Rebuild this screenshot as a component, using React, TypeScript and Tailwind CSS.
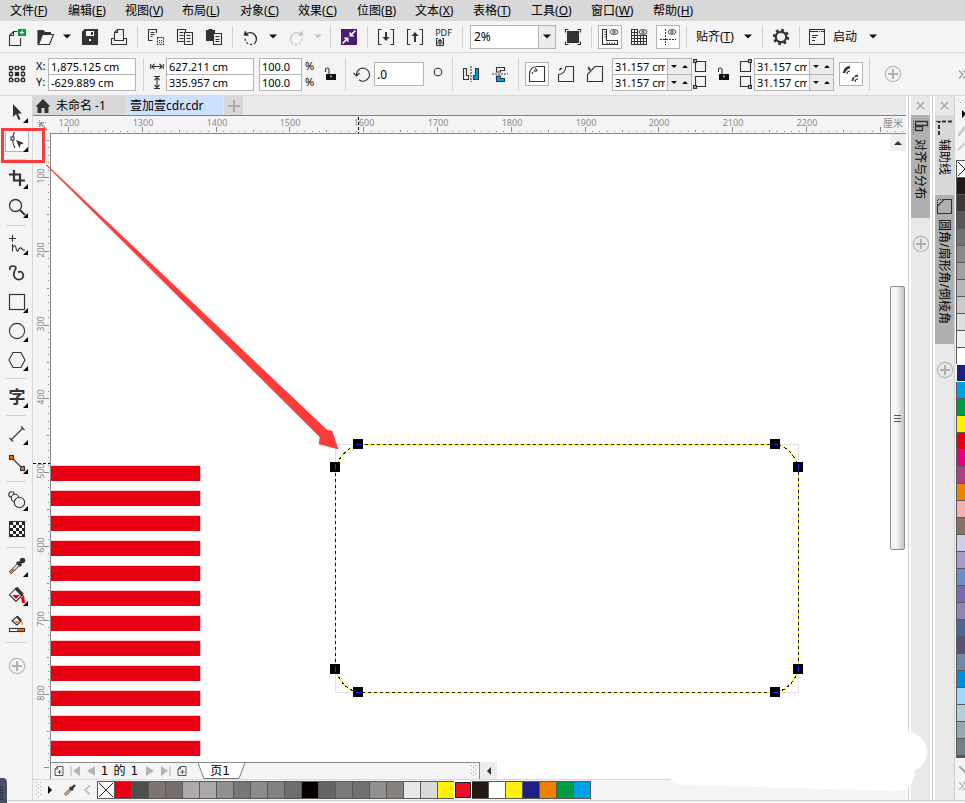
import React, { useState } from 'react'

const menus = [
  ['文件', 'F', 'w-[58px]'], ['编辑', 'E', 'w-[57px]'], ['视图', 'V', 'w-[57px]'], ['布局', 'L', 'w-[58px]'],
  ['对象', 'C', 'w-[58px]'], ['效果', 'C', 'w-[59px]'], ['位图', 'B', 'w-[58px]'], ['文本', 'X', 'w-[58px]'],
  ['表格', 'T', 'w-[58px]'], ['工具', 'O', 'w-[60px]'], ['窗口', 'W', 'w-[62px]'], ['帮助', 'H', 'w-[60px]'],
]

const sideColors = [
  '#231815', '#3e3535', '#595757', '#727171', '#898989', '#9fa0a0', '#b5b5b6', '#c9caca', '#dcdddd', '#efefef', '#ffffff',
  '#1d2088', '#00a0e9', '#009944', '#fff100', '#e60012', '#e4007f', '#ae4085', '#ef8200', '#f4b0b0', '#877067',
  '#cfcce6', '#a79bcb', '#6f8bc8', '#7a6bb0', '#9084b0', '#4e6594', '#5a506f', '#7287a6', '#008ddb', '#9fd8f6',
  '#b5cdd9', '#95a8b1', '#717f86',
]

const docColors = [
  '#e60012', '#4c4f4c', '#7d7570', '#766d6c', '#b0a9a9', '#aaaaaa', '#909090', '#787878', '#8c8c8c', '#828282',
  '#6e6e6e', '#050000', '#636664', '#7a7a7a', '#707070', '#909090', '#878180', '#e8e8e8', '#d6dad8', '#fff100',
  '#e81123', '#231815', '#ffffff', '#fff100', '#1d2088', '#ef8200', '#009944', '#00a0e9',
]

type IconProps = { children: React.ReactNode; w?: number; h?: number }

function Icon({ children, w = 18, h = 18 }: IconProps) {
  return (
    <svg width={w} height={h} viewBox={`0 0 ${w} ${h}`} fill="none" stroke="#333" strokeWidth="1.1" className="shrink-0" aria-hidden="true">
      {children}
    </svg>
  )
}

function IconButton({ label, children, boxed }: { label: string; children: React.ReactNode; boxed?: boolean }) {
  return (
    <button aria-label={label} className="flex h-6 w-[29px] shrink-0 items-center justify-center">
      <span className={boxed ? 'flex size-6 items-center justify-center border border-[#b4b4b4] bg-white' : 'flex size-6 items-center justify-center'}>
        {children}
      </span>
    </button>
  )
}

function Caret({ light }: { light?: boolean }) {
  return (
    <span className="flex w-4 shrink-0 justify-center">
      <svg width="8" height="5" aria-hidden="true"><path d="M0 0.5H8L4 4.5Z" fill={light ? '#c6c6c6' : '#111'} /></svg>
    </span>
  )
}

function Sep({ tall }: { tall?: boolean }) {
  return (
    <span className="flex w-2 shrink-0 justify-center">
      <span className={tall ? 'h-[33px] w-px bg-[#d2d2d2]' : 'h-[22px] w-px bg-[#d2d2d2]'} />
    </span>
  )
}

function Plus() {
  return (
    <Icon>
      <circle cx="9" cy="9" r="7.7" stroke="#b8b8b8" strokeWidth="1.2" />
      <path d="M9 4V14M4 9H14" stroke="#b0b0b0" strokeWidth="2" />
    </Icon>
  )
}

function Lock() {
  return (
    <Icon w={12} h={14}>
      <path d="M1.5 5V2.5Q1.5 1 3 1H3.5Q5 1 5 2.5V7" />
      <rect x="2" y="7" width="10" height="6" fill="#111" stroke="none" />
      <path d="M7 8.5V10.5" stroke="#fff" />
    </Icon>
  )
}

function Menu() {
  return (
    <nav className="flex h-[21px] shrink-0 bg-[#d8d8d8] pl-2">
      {menus.map(([name, key, w]) => (
        <button key={name} className={`${w} shrink-0 whitespace-nowrap pl-[2px] text-left`}>
          {name}(<u>{key}</u>)
        </button>
      ))}
    </nav>
  )
}

function Eye() {
  return <><ellipse cx="13" cy="4" rx="4" ry="2.4" strokeWidth="0.9" /><circle cx="13" cy="4" r="1.2" strokeWidth="0.9" /></>
}

function StandardBar() {
  const [zoom, setZoom] = useState('2%')
  return (
    <div className="flex h-8 shrink-0 items-center border-b border-[#d8d8d8] pl-[2px]">
      <IconButton label="新建">
        <Icon>
          <path d="M9.5 3.5H5.5L1.5 7.5V17.5H12.5V10M5.5 3.5V7.5H1.5" />
          <rect x="10" y="1" width="8" height="7" fill="#00a03c" stroke="none" />
          <path d="M14 2.5V6.5M12 4.5H16" stroke="#fff" />
        </Icon>
      </IconButton>
      <IconButton label="打开">
        <Icon>
          <path d="M1 16.5V2.5H6L8 4.5H13.5V6.5H5.5L1 16.5Z" fill="#333" />
          <path d="M5.5 6.5H16.5L12.5 16.5H1.5Z" fill="#f4f4f4" />
        </Icon>
      </IconButton>
      <span className="-ml-px flex"><Caret /></span>
      <IconButton label="保存">
        <Icon>
          <path d="M1.5 4L4 1.5H16.5V16.5H1.5Z" fill="#333" />
          <rect x="5" y="3" width="8" height="5" fill="#fff" stroke="none" />
          <rect x="10" y="4" width="2" height="3" fill="#333" stroke="none" />
          <rect x="8" y="11" width="2" height="2" fill="#fff" stroke="none" />
        </Icon>
      </IconButton>
      <IconButton label="打印">
        <Icon><path d="M4.5 12.5V4.5L7.5 1.5H13.5V12.5ZM7.5 1.5V4.5H4.5M4.5 10.5H1.5V16.5H16.5V10.5H13.5" /></Icon>
      </IconButton>
      <Sep />
      <IconButton label="剪切">
        <Icon>
          <path d="M9.5 5V1.5H1.5V12.5H5.5M3.5 4.5H7.5M3.5 6.5H7.5M3.5 8.5H5.5" />
          <rect x="10.5" y="9.5" width="6" height="7" strokeDasharray="2 1" />
          <path d="M12 12.5H15M12 14.5H15" strokeDasharray="1 1" />
        </Icon>
      </IconButton>
      <IconButton label="复制">
        <Icon>
          <path d="M1.5 1.5H9.5V13.5H1.5ZM3.5 4.5H7.5M3.5 7.5H7.5M3.5 10.5H7.5" />
          <path d="M8.5 4.5H16.5V16.5H8.5Z" fill="#f4f4f4" />
          <path d="M10.5 7.5H14.5M10.5 10.5H14.5M10.5 13.5H14.5" />
        </Icon>
      </IconButton>
      <IconButton label="粘贴">
        <Icon>
          <path d="M1.5 2.5H4V1.5H7V2.5H9.5V12.5H1.5Z" fill="#333" />
          <path d="M8.5 5.5H16.5V16.5H8.5Z" fill="#f4f4f4" />
          <path d="M10.5 8.5H14.5M10.5 11.5H14.5M10.5 13.5H14.5" />
        </Icon>
      </IconButton>
      <Sep />
      <IconButton label="撤消">
        <Icon>
          <path d="M4 6A6.2 6.2 0 1 1 12 16" strokeWidth="1.4" />
          <path d="M1.5 7.5L7 8L3 2.5Z" fill="#333" stroke="none" />
          <path d="M10 16.4A6.2 6.2 0 0 1 3 10.5" strokeDasharray="2 2" strokeWidth="1.4" />
        </Icon>
      </IconButton>
      <Caret />
      <IconButton label="重做">
        <Icon>
          <path d="M14 6A6.2 6.2 0 1 0 6 16" stroke="#c6c6c6" strokeWidth="1.4" />
          <path d="M16.5 7.5L11 8L15 2.5Z" fill="#c6c6c6" stroke="none" />
          <path d="M8 16.4A6.2 6.2 0 0 0 15 10.5" strokeDasharray="2 2" stroke="#c6c6c6" strokeWidth="1.4" />
        </Icon>
      </IconButton>
      <Caret light />
      <Sep />
      <IconButton label="搜索内容">
        <Icon>
          <rect x="1" y="1" width="16" height="16" fill="#4b1a78" stroke="none" />
          <path d="M15.5 2.5L11 7M2.5 15.5L7 11" stroke="#fff" strokeWidth="1.6" />
          <path d="M9.5 3.5V8.5H14.5ZM3.5 9.5H8.5V14.5Z" fill="#fff" stroke="none" />
        </Icon>
      </IconButton>
      <Sep />
      <IconButton label="导入">
        <Icon>
          <path d="M4.5 1.5H1.5V16.5H4.5M13.5 1.5H16.5V16.5H13.5" />
          <path d="M9 4V11" strokeWidth="2" /><path d="M5.5 9H12.5L9 13Z" fill="#333" stroke="none" />
        </Icon>
      </IconButton>
      <IconButton label="导出">
        <Icon>
          <path d="M4.5 1.5H1.5V16.5H4.5M13.5 1.5H16.5V16.5H13.5" />
          <path d="M9 7V14" strokeWidth="2" /><path d="M5.5 8H12.5L9 4Z" fill="#333" stroke="none" />
        </Icon>
      </IconButton>
      <button aria-label="发布为PDF" className="flex h-6 w-[29px] shrink-0 flex-col items-center justify-center text-[9px] leading-[9px] text-[#222]">
        <span>PDF</span>
        <span className="flex w-4 justify-start">
          <Icon w={8} h={9}><path d="M2 1.5H0.5V8.5H7.5V1.5H6M4 8V2M2 4.5L4 2.5L6 4.5M1 6H7" /></Icon>
        </span>
      </button>
      <Sep />
      <div className="relative ml-1 mr-[2px] h-6 w-[86px] shrink-0">
        <select aria-label="缩放级别" value={zoom} onChange={e => setZoom(e.target.value)} className="h-6 w-full appearance-none border border-[#b4b4b4] bg-white pl-[3px] outline-none">
          <option>2%</option>
          <option>50%</option>
          <option>100%</option>
        </select>
        <span className="pointer-events-none absolute inset-y-px right-px flex w-[17px] items-center border-l border-[#b4b4b4] bg-[#ececec]"><Caret /></span>
      </div>
      <IconButton label="全屏预览">
        <Icon>
          <rect x="3.5" y="3.5" width="11" height="11" fill="#333" />
          <path d="M1.5 4.5V1.5H4.5M13.5 1.5H16.5V4.5M16.5 13.5V16.5H13.5M4.5 16.5H1.5V13.5" />
        </Icon>
      </IconButton>
      <Sep />
      <IconButton label="显示标尺" boxed>
        <Icon>
          <path d="M1.5 1.5H5.5V12.5H16.5V16.5H1.5ZM3.5 4H5M3.5 6.5H5M3.5 9H5M6 14.5V16M8.5 14.5V16M11 14.5V16M13.5 14.5V16" />
          <Eye />
        </Icon>
      </IconButton>
      <IconButton label="显示网格">
        <Icon>
          <path d="M1.5 1V17M4.5 1V17M7.5 1V17M10.5 8V17M13.5 8V17M16.5 8V17M1 1.5H8M1 4.5H8M1 7.5H17M1 10.5H17M1 13.5H17M1 16.5H17" strokeWidth="1" />
          <Eye />
        </Icon>
      </IconButton>
      <IconButton label="显示辅助线" boxed>
        <Icon>
          <path d="M6.5 1V17M1 11.5H17" strokeDasharray="2 1" strokeWidth="1" />
          <Eye />
        </Icon>
      </IconButton>
      <Sep />
      <button className="flex h-6 w-[68px] shrink-0 items-center justify-between whitespace-nowrap pl-[6px] pr-[2px]">
        <span>贴齐(<u>T</u>)</span><Caret />
      </button>
      <Sep />
      <IconButton label="选项">
        <Icon>
          <circle cx="9" cy="9" r="5.2" strokeWidth="2.2" />
          <circle cx="9" cy="9" r="7" strokeWidth="2.4" strokeDasharray="2.75 2.75" />
        </Icon>
      </IconButton>
      <Sep />
      <button className="flex h-6 shrink-0 items-center gap-2 whitespace-nowrap pl-[6px]">
        <Icon w={16} h={16}>
          <rect x="0.5" y="0.5" width="15" height="15" />
          <path d="M1 2.5H15" strokeDasharray="8 1 1 1" /><path d="M3 6.5H9M3 8.5H7M3 11.5H6" />
        </Icon>
        <span>启动</span><Caret />
      </button>
    </div>
  )
}

function Field({ label, value, second, className }: { label: string; value: string; second?: boolean; className: string }) {
  const [text, setText] = useState(value)
  return (
    <input aria-label={label} value={text} onChange={e => setText(e.target.value)}
      className={`${className} ${second ? '-mt-px' : ''} h-[17px] border border-[#b4b4b4] bg-white pl-[2px] text-[11px] leading-[15px] outline-none`} />
  )
}

function Spin({ label, second }: { label: string; second?: boolean }) {
  return (
    <div className={`flex w-20 ${second ? '-mt-px' : ''}`}>
      <Field label={label} value="31.157 cm" className="w-[56px] pr-[2px]" />
      <button aria-label={label + '微调'} className="flex h-[17px] w-6 items-center justify-around border border-l-0 border-[#b4b4b4] bg-[#ececec]">
        <svg width="6" height="3" aria-hidden="true"><path d="M0 0H6L3 3Z" fill="#111" /></svg>
        <svg width="6" height="3" aria-hidden="true"><path d="M0 3H6L3 0Z" fill="#111" /></svg>
      </button>
    </div>
  )
}

function CornerIcons({ right }: { right?: boolean }) {
  return (
    <span className="flex w-4 shrink-0 justify-center">
      <Icon w={14} h={30}>
        <path d="M2.5 2.5H12.5V12.5H2.5ZM2.5 17.5H12.5V27.5H2.5Z" />
        <rect x={right ? 10.5 : 0.5} y="0.5" width="3" height="3" fill="#aaa" />
        <rect x={right ? 10.5 : 0.5} y="26.5" width="3" height="3" fill="#aaa" />
      </Icon>
    </span>
  )
}

function PropertyBar() {
  return (
    <div className="flex h-[43px] shrink-0 items-center border-b border-[#d8d8d8]">
      <span className="flex w-[34px] shrink-0 justify-center">
        <Icon>
          <path d="M3 3H15V15H3Z" />
          {[1.5, 7.5, 13.5].map(x => [1.5, 7.5, 13.5].map(y => (
            <rect key={x + '-' + y} x={x} y={y} width="3" height="3" strokeWidth="1.3" fill={x === 7.5 && y === 7.5 ? '#111' : '#fff'} />
          )))}
        </Icon>
      </span>
      <div className="w-[14px] shrink-0 pl-[2px] text-[11px] leading-4"><div>X:</div><div>Y:</div></div>
      <div className="flex w-[88px] shrink-0 flex-col">
        <Field label="X" value="1,875.125 cm" className="w-full" />
        <Field label="Y" value="-629.889 cm" second className="w-full" />
      </div>
      <span className="ml-[3px]"><Sep tall /></span>
      <span className="flex w-[19px] shrink-0 justify-center">
        <Icon w={14} h={32}>
          <path d="M0.7 6V11M13.3 6V11M2 8.5H12M4.5 6L2 8.5L4.5 11M9.5 6L12 8.5L9.5 11M4 18.5H10M4 30.5H10M7 19V30M4.5 22L7 19.5L9.5 22M4.5 27L7 29.5L9.5 27" />
        </Icon>
      </span>
      <div className="flex w-[88px] shrink-0 flex-col">
        <Field label="宽度" value="627.211 cm" className="w-full" />
        <Field label="高度" value="335.957 cm" second className="w-full" />
      </div>
      <div className="ml-[5px] flex w-[43px] shrink-0 flex-col">
        <Field label="水平缩放" value="100.0" className="w-full" />
        <Field label="垂直缩放" value="100.0" second className="w-full" />
      </div>
      <div className="w-4 shrink-0 pl-[3px] text-[11px] leading-4"><div>%</div><div>%</div></div>
      <button aria-label="锁定比率" className="flex w-[23px] shrink-0 justify-center"><Lock /></button>
      <Sep tall />
      <span className="flex w-[25px] shrink-0 justify-center">
        <Icon><path d="M3.5 10A6.5 6.5 0 1 1 6 14.8" strokeWidth="1.1" /><path d="M0.5 8L3.5 11L6.5 8" /></Icon>
      </span>
      <Field label="旋转角度" value=".0" className="h-6! w-[50px] shrink-0 text-xs!" />
      <span className="flex w-6 shrink-0 justify-center pb-[5px] pl-1"><Icon w={10} h={10}><circle cx="5" cy="5" r="3.8" /></Icon></span>
      <Sep tall />
      <IconButton label="水平镜像">
        <Icon>
          <path d="M1.5 3.5H4.5V10.5H6.5V14.5H1.5Z" />
          <path d="M16.5 3.5H13.5V10.5H11.5V14.5H16.5Z" fill="#00a0e9" />
          <path d="M9 1V17" strokeDasharray="2 1" />
        </Icon>
      </IconButton>
      <IconButton label="垂直镜像">
        <Icon>
          <path d="M5.5 2.5H13.5V5.5H9.5V7H5.5Z" />
          <path d="M5.5 16.5H13.5V13.5H9.5V11H5.5Z" fill="#00a0e9" />
          <path d="M1 9H17" strokeDasharray="2 1" />
        </Icon>
      </IconButton>
      <Sep tall />
      <IconButton label="圆角" boxed>
        <Icon><path d="M1.5 16.5V9Q2 2 9 1.5H16.5V16.5Z" /><path d="M4 9Q5 6 8 5" strokeDasharray="2 1" /><path d="M7 3.5L9 5L7.5 7" /></Icon>
      </IconButton>
      <IconButton label="扇形角">
        <Icon><path d="M1.5 16.5V9.5Q8 9 9 1.5H16.5V16.5ZM2 5L5 3M3 3L4 5" /></Icon>
      </IconButton>
      <IconButton label="倒棱角">
        <Icon><path d="M1.5 16.5V9.5L9 1.5H16.5V16.5ZM2 1.5L4.5 4.5M2 3.5L4 5.5" /></Icon>
      </IconButton>
      <div className="ml-[3px] shrink-0"><Spin label="左上角半径" /><Spin label="左下角半径" second /></div>
      <CornerIcons />
      <button aria-label="同时编辑所有角" className="flex w-[29px] shrink-0 justify-center"><Lock /></button>
      <CornerIcons right />
      <div className="ml-px shrink-0"><Spin label="右上角半径" /><Spin label="右下角半径" second /></div>
      <span className="ml-[2px] flex"><IconButton label="相对角缩放" boxed>
        <Icon><path d="M2 8Q3 3 8 2" strokeWidth="2.4" /><path d="M5 9Q5 6 8 6" /><path d="M10.5 16Q11 11 16 10.5" strokeWidth="1.8" strokeDasharray="4 1" /><path d="M13 17Q13 14 16 14" /></Icon>
      </IconButton></span>
      <Sep tall />
      <button aria-label="自定义" className="flex w-10 shrink-0 justify-center"><Plus /></button>
      <button aria-label="更多" className="ml-auto flex w-[7px] shrink-0"><Icon w={7} h={9}><path d="M1 0.5L5 4.5L1 8.5M5 0.5L9 4.5L5 8.5" stroke="#999" /></Icon></button>
    </div>
  )
}

const tools: { name: string; fly?: boolean; gap?: boolean; active?: boolean; art: React.ReactNode }[] = [
  { name: '选择', fly: true, art: <path d="M5 1V14L8 11L10.5 17L12.5 16L10 10.5H14Z" fill="#333" stroke="none" /> },
  { name: '形状', fly: true, active: true, art: <><path d="M6.5 0Q2.5 8 7 16" /><rect x="3" y="5" width="3" height="3" fill="#fff" /><path d="M8 8L16 11L12.5 12.5L11.5 16Z" fill="#333" stroke="none" /></> },
  { name: '裁剪', gap: true, fly: true, art: <path d="M6 1V11.5H17M1 5.5H12V17" strokeWidth="2.2" /> },
  { name: '缩放', fly: true, art: <><circle cx="7.5" cy="7.5" r="6" strokeWidth="1.3" /><path d="M12 12L17 17" strokeWidth="2" /></> },
  { name: '手绘', gap: true, fly: true, art: <path d="M4.5 0V7M1 3.5H8M4.5 9V16.5M4.5 13Q7 8 8 13T10.5 15T13 13T15.5 15H17" strokeWidth="1.1" /> },
  { name: '艺术笔', art: <path d="M2 6Q1 2 5 2Q10 2 6.5 7Q5 11 7 14Q9 16 12 15.5Q16.5 14 15 10Q13 6 10 8.5" strokeWidth="1.7" /> },
  { name: '矩形', fly: true, art: <rect x="1.5" y="1.5" width="15" height="15" strokeWidth="1.2" /> },
  { name: '椭圆形', fly: true, art: <circle cx="9" cy="9" r="7.6" /> },
  { name: '多边形', fly: true, art: <path d="M5 1.5H13L17 9L13 16.5H5L1 9Z" /> },
  { name: '文本', gap: true, fly: true, art: null },
  { name: '平行度量', gap: true, fly: true, art: <path d="M3 15L15 3M1.5 13L5 16.5M13 1.5L16.5 5" /> },
  { name: '连接器', fly: true, art: <><path d="M3 3L14 14" /><rect x="1.5" y="1.5" width="4" height="4" fill="#f60" /><rect x="12.5" y="12.5" width="4" height="4" fill="#f60" /></> },
  { name: '调和', gap: true, fly: true, art: <><circle cx="3.5" cy="3.5" r="2.7" /><circle cx="7" cy="7" r="3.7" fill="#f4f4f4" /><circle cx="11.5" cy="11.5" r="5.2" fill="#f4f4f4" /></> },
  {
    name: '透明度', art: <>
      <rect x="1.5" y="1.5" width="15" height="15" fill="#fff" />
      {Array.from({ length: 25 }, (_, i) => i).filter(i => i % 2 === 0).map(i => (
        <rect key={i} x={2 + (i % 5) * 3} y={2 + Math.floor(i / 5) * 3} width="3" height="3" fill="#222" stroke="none" />
      ))}
    </>
  },
  { name: '颜色滴管', gap: true, fly: true, art: <><path d="M2 16L11 7" stroke="#555" strokeWidth="3.6" /><path d="M3 15L11 7" stroke="#fff" strokeWidth="1.6" /><path d="M2 16L6 12" stroke="#f60" strokeWidth="2.2" /><path d="M9 5L13 9M11 7L15 3" strokeWidth="3" /><circle cx="14.5" cy="3.5" r="2.2" fill="#333" /></> },
  { name: '交互式填充', fly: true, art: <><path d="M1.5 9L8 2L14.5 9L8 15.5Z" fill="#fff" /><path d="M8 2L14.5 9" strokeWidth="3.5" /><path d="M4 9H12L8 13Z" fill="#e60012" stroke="none" /><path d="M13 12L16 9L17 17H14Z" fill="#e60012" stroke="none" /></> },
  { name: '智能填充', art: <><path d="M4 6L9 1.5L13 6L9 10Z" fill="#fff" /><path d="M9 1.5L13 6" strokeWidth="2.5" /><path d="M6 6H11L9 8.5Z" fill="#f60" stroke="none" /><path d="M14 7V10" stroke="#f60" /><rect x="1.5" y="13.5" width="15" height="3" fill="#fff" /><rect x="9" y="14" width="7" height="2" fill="#f60" stroke="none" /></> },
]

function Toolbox() {
  return (
    <aside className="flex w-[33px] shrink-0 flex-col border-r border-[#d8d8d8] pt-px">
      {tools.map(t => (
        <React.Fragment key={t.name}>
          {t.gap && <div className="mx-[6px] mb-[2px] mt-1 h-[2px] shrink-0 border-t border-[#d0d0d0]" />}
          <button aria-label={t.name} className="relative flex h-[29px] shrink-0 items-center justify-center pl-[2px]">
            <span className={t.active ? 'flex h-[23px] w-6 items-center justify-center border border-[#b4b4b4] bg-white' : 'flex'}>
              {t.art ? <Icon>{t.art}</Icon> : <span className="text-[17px] font-bold leading-5 text-[#333]">字</span>}
            </span>
            {t.fly && <svg width="5" height="5" className="absolute bottom-[3px] right-1" aria-hidden="true"><path d="M5 0V5H0Z" fill="#000" /></svg>}
          </button>
        </React.Fragment>
      ))}
      <div className="mx-[6px] mb-[2px] mt-1 h-[2px] shrink-0 border-t border-[#d0d0d0]" />
      <button aria-label="快速自定义" className="mt-[5px] flex h-[29px] shrink-0 items-center justify-center pl-[2px]"><Plus /></button>
    </aside>
  )
}

// 100 units take 74px on screen, with ten subdivisions
const STEP = 7.38

function TopRuler() {
  const ticks = Array.from({ length: 115 }, (_, i) => i - 1)
  return (
    <div className="flex h-[18px] shrink-0 bg-[#f4f4f4]">
      <div className="flex w-[17px] shrink-0 items-center justify-center">
        <Icon w={12} h={12}><path d="M1 3.5H11M3.5 1V11" strokeDasharray="1 1" stroke="#888" /><path d="M4 4L11 11M4 8V4H8" stroke="#888" /></Icon>
      </div>
      <div className="min-w-0 flex-1 border-b border-[#8a8a8a]">
        <svg className="block h-[17px] w-full" fontSize="9" fill="#8a8a8a" textAnchor="middle" aria-hidden="true">
          {ticks.map(k => {
            const x = Math.round(18 + k * STEP)
            const h = k % 10 === 0 ? 5 : k % 5 === 0 ? 2 : 1
            return <rect key={k} x={x} y={16 - h} width="1" height={h} />
          })}
          {Array.from({ length: 11 }, (_, i) => (
            <text key={i} x={Math.round(19 + i * STEP * 10)} y="10">{1200 + i * 100}</text>
          ))}
          <text x="843" y="11" fontSize="10">厘米</text>
          <path d="M308.5 1V17" stroke="#000" strokeDasharray="3 2" />
        </svg>
      </div>
    </div>
  )
}

function LeftRuler() {
  const ticks = Array.from({ length: 86 }, (_, i) => i - 5)
  return (
    <div className="w-[18px] shrink-0 border-r border-[#8a8a8a] bg-[#f4f4f4]">
      <svg className="block h-full w-[17px]" fontSize="9" fill="#8a8a8a" textAnchor="middle" aria-hidden="true">
        {ticks.map(k => {
          const w = k % 10 === 0 ? 5 : k % 5 === 0 ? 2 : 1
          return <rect key={k} x={16 - w} y={Math.round(43 + k * STEP)} width={w} height="1" />
        })}
        {Array.from({ length: 8 }, (_, i) => (
          <text key={i} transform={`translate(11 ${Math.round(42 + i * STEP * 10)}) rotate(-90)`}>{100 + i * 100}</text>
        ))}
        <path d="M0 329.5H17" stroke="#000" strokeDasharray="3 2" />
      </svg>
    </div>
  )
}

function Canvas() {
  const handles = [[307, 310], [724, 310], [284, 333], [747, 333], [284, 535], [747, 535], [307, 558], [724, 558]]
  const outline = 'M307.5 310.5H724.5Q741 313 747.5 333.5V535.5Q741 555 724.5 558.5H307.5Q291 555 284.5 535.5V333.5Q291 316 307.5 310.5Z'
  return (
    <div className="relative min-w-0 flex-1">
      <svg className="absolute inset-0 size-full" aria-hidden="true">
        {Array.from({ length: 12 }, (_, i) => (
          <g key={i}>
            <rect x="0" y={331 + i * 25} width="150" height="16" fill="#fbc9cd" />
            <rect x="0" y={332 + i * 25} width="149" height="15" fill="#e60012" />
          </g>
        ))}
        <rect x="284.5" y="310.5" width="463" height="248" fill="none" stroke="#dbe3ea" />
        <path d={outline} fill="none" stroke="#f4f000" shapeRendering="crispEdges" />
        <path d={outline} fill="none" stroke="#111" strokeDasharray="3 3" shapeRendering="crispEdges" />
        {handles.map(([x, y], i) => (
          <g key={i}>
            <rect x={x - 5} y={y - 5} width="10" height="10" fill="#000" />
            {i === 0 || i === 1 || i > 5
              ? <rect x={x - 2} y={y} width="5" height="1" fill="#22f" />
              : <rect x={x} y={y - 3} width="1" height="6" fill="#22f" />}
          </g>
        ))}
      </svg>
    </div>
  )
}

function PageNav() {
  const page = <Icon w={10} h={12}><path d="M3.5 1.5H9V10.5H1V4ZM3.5 1.5V4H1M5.5 5V9M3.5 7H7.5" stroke="#555" strokeWidth="1" /></Icon>
  return (
    <div className="flex h-[17px] shrink-0 bg-white">
      <div className="flex w-[429px] shrink-0 items-center border-r border-t border-[#8a8a8a] bg-[#f4f4f4]">
        <button aria-label="在前添加页" className="flex w-4 justify-center">{page}</button>
        <button aria-label="第一页" className="flex w-4 justify-center"><Icon w={10} h={10}><path d="M1 0V10" stroke="#b4b4b4" /><path d="M10 0V10L3 5Z" fill="#b4b4b4" stroke="none" /></Icon></button>
        <button aria-label="上一页" className="flex w-4 justify-center"><Icon w={8} h={10}><path d="M8 0V10L0 5Z" fill="#b4b4b4" stroke="none" /></Icon></button>
        <span className="flex w-[43px] justify-center gap-[5px] pr-[2px] font-['DejaVu_Sans','Noto_Sans_CJK_SC',sans-serif]"><span>1</span><span>的</span><span>1</span></span>
        <button aria-label="下一页" className="flex w-4 justify-center"><Icon w={8} h={10}><path d="M0 0V10L8 5Z" fill="#b4b4b4" stroke="none" /></Icon></button>
        <button aria-label="最后一页" className="flex w-4 justify-center"><Icon w={10} h={10}><path d="M9 0V10" stroke="#b4b4b4" /><path d="M0 0V10L7 5Z" fill="#b4b4b4" stroke="none" /></Icon></button>
        <button aria-label="在后添加页" className="flex w-4 justify-center">{page}</button>
        <button className="relative ml-2 h-[17px] w-12 pr-1 font-['DejaVu_Sans','Noto_Sans_CJK_SC',sans-serif] leading-[15px]">
          <svg width="48" height="17" className="absolute inset-0" aria-hidden="true"><path d="M0 0L6 15.5H41L47 0" fill="#fff" stroke="#777" /></svg>
          <span className="relative">页1</span>
        </button>
        <span className="ml-auto mr-[2px]"><Dots w={6} h={12} /></span>
      </div>
      <button aria-label="向左滚动" className="flex w-[17px] items-center justify-center bg-[#ececec]">
        <Icon w={5} h={8}><path d="M5 0V8L1 4Z" fill="#333" stroke="none" /></Icon>
      </button>
    </div>
  )
}

function Dots({ w, h }: { w: number; h: number }) {
  return (
    <svg width={w} height={h} className="block" aria-hidden="true">
      {Array.from({ length: Math.floor(h / 2) }, (_, r) => (
        <g key={r} fill="#aaa">
          <rect x={r % 2 ? 2 : 0} y={r * 2} width="1" height="1" />
          <rect x={r % 2 ? 6 : 4} y={r * 2} width="1" height="1" />
        </g>
      ))}
    </svg>
  )
}

function NoFill() {
  return <svg width="16" height="16" className="shrink-0 bg-white" aria-hidden="true"><path d="M1 1L15 15M15 1L1 15" stroke="#222" /></svg>
}

function DocPalette() {
  return (
    <div className="flex h-[21px] shrink-0 items-center border-t border-[#d8d8d8] bg-[#f4f4f4] pl-[3px]">
      <Dots w={6} h={16} />
      <button aria-label="调色板菜单" className="ml-[6px]"><Icon w={5} h={8}><path d="M0 0V8L4 4Z" fill="#000" stroke="none" /></Icon></button>
      <span className="ml-[10px]"><Icon w={14} h={14}><path d="M2 12L9 5" stroke="#555" strokeWidth="3" /><path d="M2 12L7 7" stroke="#f0b080" strokeWidth="1.4" /><path d="M7 4L10 7M9 5L12 2" strokeWidth="2.4" /></Icon></span>
      <button aria-label="向左" className="mx-[6px]"><Icon w={8} h={10}><path d="M7 0.5L2 5L7 9.5" stroke="#c4c4c4" strokeWidth="2" /></Icon></button>
      <div className="flex h-[18px] bg-[#595959] p-px pr-0">
        <button aria-label="无填充" className="mr-px flex h-4 w-4 items-center justify-center bg-white"><NoFill /></button>
        {docColors.map((c, i) => (
          <button key={i} aria-label={c}
            className={i === 20 ? 'mr-px h-4 w-4 border border-[#222] outline outline-white' : 'mr-px h-4 w-4'}
            style={{ backgroundColor: c }} />
        ))}
      </div>
    </div>
  )
}

function Close() {
  return <button aria-label="关闭" className="flex h-[19px] w-full shrink-0 items-center justify-center"><Icon w={9} h={9}><path d="M1 1L8 8M8 1L1 8" stroke="#a8a8a8" strokeWidth="1.4" /></Icon></button>
}

function DockTab({ label, shade, children, h }: { label: string; shade: string; children: React.ReactNode; h: string }) {
  return (
    <button className={`flex w-full shrink-0 flex-col items-center gap-1 pt-[3px] ${h} ${shade}`}>
      <Icon w={17} h={17}>{children}</Icon>
      <span className="whitespace-nowrap leading-[17px] [text-orientation:sideways] [writing-mode:vertical-rl]">{label}</span>
    </button>
  )
}

function DockLine() {
  return <div className="flex w-[5px] shrink-0 justify-center bg-white"><div className="w-px bg-[#d0d0d0]" /></div>
}

function Dockers() {
  return (
    <>
      <DockLine />
      <div className="flex w-[19px] shrink-0 flex-col items-center bg-[#e9e9e9]">
        <Close />
        <DockTab label="对齐与分布" shade="bg-[#b0b0b0]" h="h-[103px]">
          <path d="M1.5 2V16" stroke="#00a0e9" strokeDasharray="2 1" /><path d="M3.5 3.5H15.5V7.5H3.5ZM3.5 8.5H10.5V12.5H3.5Z" strokeWidth="1.3" />
        </DockTab>
        <button aria-label="添加泊坞窗" className="mt-[17px]"><Plus /></button>
      </div>
      <DockLine />
      <div className="flex w-[19px] shrink-0 flex-col items-center bg-[#e9e9e9]">
        <Close />
        <DockTab label="辅助线" shade="bg-[#d8d8d8]" h="h-20">
          <path d="M3 17V4M6 3.5H17" strokeDasharray="4 2" strokeWidth="2" /><path d="M0 3.5H5" />
        </DockTab>
        <DockTab label="圆角/扇形角/倒棱角" shade="bg-[#b0b0b0]" h="h-[149px]">
          <path d="M1.5 15.5V8L8 1.5H15.5V15.5Z" /><path d="M1.5 7V1.5H7" strokeDasharray="1 1" />
        </DockTab>
        <button aria-label="添加泊坞窗" className="mt-[17px]"><Plus /></button>
      </div>
    </>
  )
}

function SidePalette() {
  return (
    <div className="flex w-[11px] shrink-0 flex-col overflow-hidden border-l border-[#d0d0d0] bg-[#f4f4f4]">
      <div className="flex h-16 shrink-0 flex-col gap-[5px] pl-[3px] pt-1">
        <Dots w={7} h={5} />
        <Icon w={7} h={8}><path d="M4 0V8L8 4Z" fill="#000" stroke="none" /></Icon>
        <Icon w={7} h={14}><path d="M0 13L7 4" stroke="#c8c8c8" strokeWidth="2.5" /></Icon>
        <Icon w={7} h={9}><path d="M0 8L7 1" stroke="#d0d0d0" strokeWidth="2" /></Icon>
      </div>
      <div className="ml-px flex w-[17px] shrink-0 flex-col border-l border-t border-[#595959] bg-[#595959]">
        <button aria-label="无填充" className="mb-px flex h-4"><NoFill /></button>
        {sideColors.map((c, i) => (
          <button key={i} aria-label={c} className={i === 11 ? 'mb-px h-4 border border-[#222] outline outline-white' : 'mb-px h-4'} style={{ backgroundColor: c }} />
        ))}
        <span className="h-[2px]" />
      </div>
      <div className="flex flex-col gap-[9px] pl-1 pt-2">
        <Icon w={7} h={7}><path d="M0 0L6 6L12 0" stroke="#aaa" strokeWidth="2" /></Icon>
        <Icon w={7} h={8}><path d="M0 0L4 4L0 8M4 0L8 4L4 8" stroke="#aaa" /></Icon>
      </div>
    </div>
  )
}

function VScroll() {
  return (
    <div className="flex w-4 shrink-0 flex-col bg-white">
      <button aria-label="向上滚动" className="flex h-[17px] w-full items-center justify-center bg-[#efefef]">
        <Icon w={8} h={5}><path d="M0 5L4 1L8 5Z" fill="#333" stroke="none" /></Icon>
      </button>
      <div className="flex-[135]" />
      <div className="flex h-[264px] w-[15px] items-center justify-center rounded-[2px] border border-[#8f8f8f] bg-linear-to-r from-[#f6f6f6] from-40% to-[#c4c4c8]">
        <Icon w={7} h={9}><path d="M0 1.5H7M0 4.5H7M0 7.5H7" stroke="#555" /></Icon>
      </div>
      <div className="flex-[212]" />
    </div>
  )
}

function DocTabs() {
  return (
    <div className="flex h-5 shrink-0 border-b border-[#1ba0e8] bg-[#e9e9e9]">
      <button aria-label="欢迎屏幕" className="flex w-5 items-center justify-center bg-[#d8d8d8]">
        <Icon w={16} h={16}><path d="M8 1L0.5 8.5H2.5V15H6.5V10H9.5V15H13.5V8.5H15.5Z" fill="#333" stroke="none" /></Icon>
      </button>
      <button className="w-[73px] bg-[#d8d8d8] pl-[3px] text-left">未命名 -1</button>
      <button className="ml-px w-24 bg-[#cce0ff] pl-[3px] text-left">壹加壹cdr.cdr</button>
      <button aria-label="新建文档" className="ml-px flex w-[19px] items-center justify-center bg-[#d8d8d8]">
        <Icon w={12} h={12}><path d="M6 0V12M0 6H12" stroke="#aaa" strokeWidth="2" /></Icon>
      </button>
    </div>
  )
}

export default function App() {
  return (
    <div className="relative flex h-screen flex-col overflow-hidden bg-[#f4f4f4] font-['Noto_Sans','Noto_Sans_CJK_SC',sans-serif] text-xs leading-[19px] text-black">
      <Menu />
      <StandardBar />
      <PropertyBar />
      <div className="flex min-h-0 flex-1">
        <Toolbox />
        <main className="flex min-w-0 flex-1 flex-col">
          <DocTabs />
          <TopRuler />
          <div className="flex min-h-0 flex-1">
            <LeftRuler />
            <div className="flex min-w-0 flex-1 flex-col bg-white">
              <div className="flex min-h-0 flex-1"><Canvas /><VScroll /></div>
              <PageNav />
            </div>
          </div>
          <DocPalette />
        </main>
        <Dockers />
        <SidePalette />
      </div>
      <footer className="h-[3px] shrink-0 border-t border-[#d0d0d0]" />

      {/* marks drawn over the window */}
      <svg width="965" height="803" className="pointer-events-none absolute left-0 top-0" aria-hidden="true">
        <path d="M672 760H906V731C918 733 927 741 927 751C927 762 921 768 915 770C915 782 908 791 898 791L684 785Q674 784 670 779Z" fill="#fff" />
        <rect x="2.5" y="129.5" width="41" height="32" fill="none" stroke="#fb3c3c" strokeWidth="3" />
        <path d="M46 165L47 165L327 430L332 431L338 449L319 444L320 437Z" fill="#fb3c3c" stroke="#fb3c3c" strokeWidth="0.6" />
        <path d="M0 778H3Q7 778 7 783V803H0Z" fill="#4a4f60" />
        <path d="M0 787H3M0 790H3M0 793H3M0 796H3M0 799H3" stroke="#1f2230" />
      </svg>
    </div>
  )
}
